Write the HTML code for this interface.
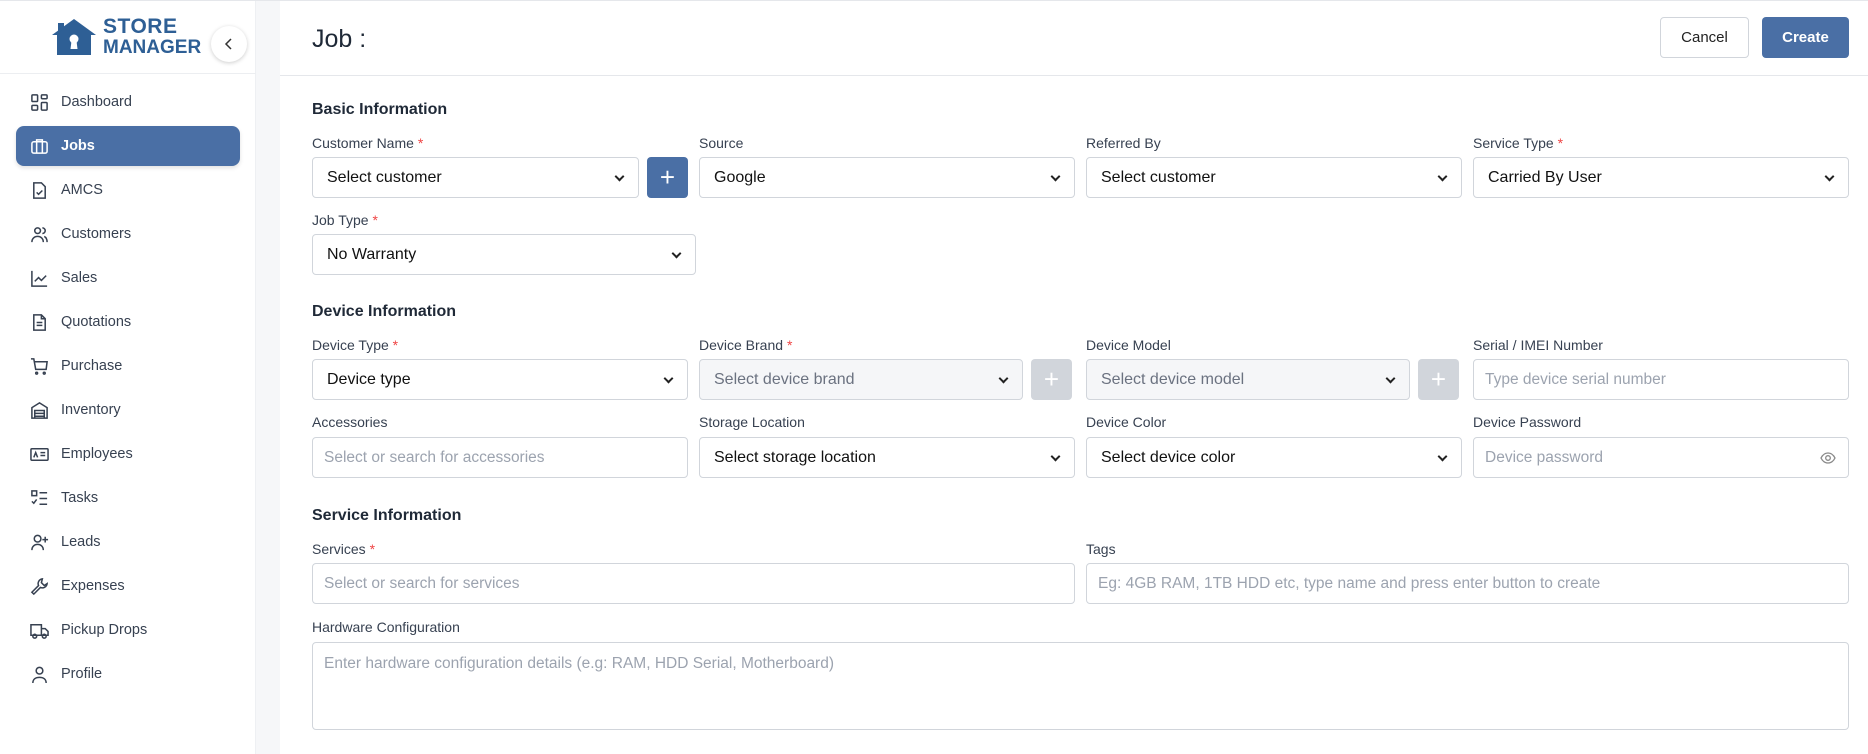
<!DOCTYPE html>
<html><head><meta charset="utf-8"><style>
*{box-sizing:border-box;margin:0;padding:0}
body{width:1868px;height:754px;overflow:hidden;background:#fff;font-family:"Liberation Sans",Arial,sans-serif;position:relative;color:#1f2937}
.abs{position:absolute}
.side{left:0;top:0;width:256px;height:754px;background:#fff;border-right:1px solid #eef0f3}
.gap{left:256px;top:0;width:24px;height:754px;background:#f6f7f9}
.topline{left:0;top:0;width:1868px;height:1px;background:#e5e7eb}
.item{position:absolute;left:30px;height:20px;display:flex;align-items:center;font-size:14.5px;color:#374151}
.item svg{width:19px;height:19px;margin-right:12px;stroke:#374151;fill:none;stroke-width:1.6}
.lbl{position:absolute;font-size:14px;color:#374151}
.lbl b{color:#ef4444;font-weight:normal}
.h{position:absolute;font-size:16px;font-weight:bold;color:#1f2937}
.f{position:absolute;height:41px;border:1px solid #d1d5db;border-radius:4px;background:#fff;font-size:16px;color:#111;padding-left:14px;display:flex;align-items:center}
.f.ph{color:#9ca3af;padding-left:11px;font-size:15.5px}
.f.dis{background:#f5f6f8;color:#6b7280}
.f.sel::after{content:"";position:absolute;right:15px;top:15px;width:5px;height:5px;border-right:2px solid #222;border-bottom:2px solid #222;transform:rotate(45deg)}
.plus{position:absolute;width:41px;height:41px;border-radius:4px;background:#4a6fa5;color:#fff;font-size:26px;display:flex;align-items:center;justify-content:center;font-weight:300}
</style></head><body>
<div class="abs side"></div>
<div class="abs gap"></div>
<div class="abs topline"></div>
<!-- logo -->
<svg class="abs" style="left:50px;top:17px" width="48" height="40" viewBox="0 0 48 40"><path d="M2 18 L24 2 L46 18 L41 18 L41 38 L7 38 L7 18 Z" fill="#2e5f95"/><path d="M8 6h6v6l-6 4z" fill="#2e5f95"/><circle cx="24" cy="22" r="4.5" fill="#fff"/><path d="M21.5 24 L20.5 32 L27.5 32 L26.5 24Z" fill="#fff"/></svg>
<div class="abs" style="left:103px;top:17px;font-size:21px;font-weight:bold;color:#2e5f95;line-height:20px;letter-spacing:0.5px">STORE</div>
<div class="abs" style="left:103px;top:38px;font-size:19px;font-weight:bold;color:#2e5f95;line-height:20px">MANAGER</div>
<div class="abs" style="left:211px;top:26px;width:36px;height:36px;border-radius:50%;background:#fff;box-shadow:0 1px 4px rgba(0,0,0,.2);display:flex;align-items:center;justify-content:center"><svg width="12" height="12" viewBox="0 0 12 12"><path d="M8 1 L3 6 L8 11" stroke="#333" stroke-width="1.5" fill="none"/></svg></div>
<div class="abs" style="left:0;top:73px;width:256px;height:1px;background:#eceef1"></div>
<div class="abs" style="left:16px;top:126px;width:224px;height:40px;border-radius:8px;background:#4a6fa5;box-shadow:0 2px 4px rgba(0,0,0,.12)"></div>

<div class="item" style="top:92px"><svg viewBox="0 0 20 20"><rect x="2" y="2" width="6" height="7" rx="1"/><rect x="12" y="2" width="6" height="4" rx="1"/><rect x="2" y="13" width="6" height="5" rx="1"/><rect x="12" y="10" width="6" height="8" rx="1"/></svg>Dashboard</div>
<div class="item" style="top:136px;color:#fff;font-weight:bold"><svg viewBox="0 0 20 20" style="stroke:#fff"><rect x="2" y="5" width="16" height="12" rx="2"/><path d="M7 5V3h6v2M7 5v12M13 5v12"/></svg>Jobs</div>
<div class="item" style="top:180px"><svg viewBox="0 0 20 20"><path d="M4 2h8l4 4v12H4z"/><path d="M7 12l2 2 4-4"/></svg>AMCS</div>
<div class="item" style="top:224px"><svg viewBox="0 0 20 20"><circle cx="8" cy="6" r="3"/><path d="M2 18c0-4 3-6 6-6s6 2 6 6M13 3a3 3 0 010 6M15 12c2 1 3 3 3 6"/></svg>Customers</div>
<div class="item" style="top:268px"><svg viewBox="0 0 20 20"><path d="M2 2v16h16M5 13l4-4 3 3 5-5"/></svg>Sales</div>
<div class="item" style="top:312px"><svg viewBox="0 0 20 20"><path d="M4 2h8l4 4v12H4z M12 2v4h4M7 10h6M7 13h6"/></svg>Quotations</div>
<div class="item" style="top:356px"><svg viewBox="0 0 20 20"><path d="M1 2h3l2 11h11l1-8H5"/><circle cx="7" cy="17" r="1"/><circle cx="15" cy="17" r="1"/></svg>Purchase</div>
<div class="item" style="top:400px"><svg viewBox="0 0 20 20"><path d="M2 18V7l8-5 8 5v11zM5 10h10v8H5zM5 13h10M5 16h10"/></svg>Inventory</div>
<div class="item" style="top:444px"><svg viewBox="0 0 20 20"><rect x="1" y="4" width="18" height="12" rx="1"/><path d="M4 13l2-5 2 5M11 8h5M11 11h5"/></svg>Employees</div>
<div class="item" style="top:488px"><svg viewBox="0 0 20 20"><rect x="2" y="2" width="5" height="5"/><path d="M2 13l2 2 3-4M10 4h8M10 10h8M10 16h8"/></svg>Tasks</div>
<div class="item" style="top:532px"><svg viewBox="0 0 20 20"><circle cx="8" cy="6" r="3.5"/><path d="M2 18c0-4 3-6 6-6s6 2 6 6M16 4v6M13 7h6"/></svg>Leads</div>
<div class="item" style="top:576px"><svg viewBox="0 0 20 20"><path d="M13 2a5 5 0 00-4 7L2 16l2 2 7-7a5 5 0 007-4l-3 2-3-3z"/></svg>Expenses</div>
<div class="item" style="top:620px"><svg viewBox="0 0 20 20"><path d="M1 4h11v11H1zM12 8h4l3 3v4h-7"/><circle cx="5" cy="16" r="2"/><circle cx="15" cy="16" r="2"/></svg>Pickup Drops</div>
<div class="item" style="top:664px"><svg viewBox="0 0 20 20"><circle cx="10" cy="6" r="3.5"/><path d="M3 19c0-4 3-6 7-6s7 2 7 6"/></svg>Profile</div>

<!-- header -->
<div class="abs" style="left:312px;top:25px;font-size:25px;color:#1f2937">Job :</div>
<div class="abs" style="left:280px;top:75px;width:1588px;height:1px;background:#e5e7eb"></div>
<div class="abs" style="left:1660px;top:17px;width:89px;height:41px;border:1px solid #d1d5db;border-radius:4px;display:flex;align-items:center;justify-content:center;font-size:15px;color:#222">Cancel</div>
<div class="abs" style="left:1762px;top:17px;width:87px;height:41px;background:#4a6fa5;border-radius:4px;display:flex;align-items:center;justify-content:center;font-size:15px;color:#fff;font-weight:bold">Create</div>

<!-- Basic -->
<div class="h" style="left:312px;top:101px">Basic Information</div>
<div class="lbl" style="left:312px;top:135px">Customer Name <b>*</b></div>
<div class="f sel" style="left:312px;top:157px;width:327px">Select customer</div>
<div class="plus" style="left:647px;top:157px">+</div>
<div class="lbl" style="left:699px;top:135px">Source</div>
<div class="f sel" style="left:699px;top:157px;width:376px">Google</div>
<div class="lbl" style="left:1086px;top:135px">Referred By</div>
<div class="f sel" style="left:1086px;top:157px;width:376px">Select customer</div>
<div class="lbl" style="left:1473px;top:135px">Service Type <b>*</b></div>
<div class="f sel" style="left:1473px;top:157px;width:376px">Carried By User</div>
<div class="lbl" style="left:312px;top:212px">Job Type <b>*</b></div>
<div class="f sel" style="left:312px;top:234px;width:384px">No Warranty</div>

<!-- Device -->
<div class="h" style="left:312px;top:303px">Device Information</div>
<div class="lbl" style="left:312px;top:337px">Device Type <b>*</b></div>
<div class="f sel" style="left:312px;top:359px;width:376px">Device type</div>
<div class="lbl" style="left:699px;top:337px">Device Brand <b>*</b></div>
<div class="f sel dis" style="left:699px;top:359px;width:324px">Select device brand</div>
<div class="plus" style="left:1031px;top:359px;background:#d1d5db">+</div>
<div class="lbl" style="left:1086px;top:337px">Device Model</div>
<div class="f sel dis" style="left:1086px;top:359px;width:324px">Select device model</div>
<div class="plus" style="left:1418px;top:359px;background:#d1d5db">+</div>
<div class="lbl" style="left:1473px;top:337px">Serial / IMEI Number</div>
<div class="f ph" style="left:1473px;top:359px;width:376px">Type device serial number</div>

<div class="lbl" style="left:312px;top:414px">Accessories</div>
<div class="f ph" style="left:312px;top:437px;width:376px">Select or search for accessories</div>
<div class="lbl" style="left:699px;top:414px">Storage Location</div>
<div class="f sel" style="left:699px;top:437px;width:376px">Select storage location</div>
<div class="lbl" style="left:1086px;top:414px">Device Color</div>
<div class="f sel" style="left:1086px;top:437px;width:376px">Select device color</div>
<div class="lbl" style="left:1473px;top:414px">Device Password</div>
<div class="f ph" style="left:1473px;top:437px;width:376px">Device password
<svg style="position:absolute;right:12px;top:13px" width="16" height="14" viewBox="0 0 16 14"><path d="M1 7c2-4 5-5 7-5s5 1 7 5c-2 4-5 5-7 5S3 11 1 7z" fill="none" stroke="#888" stroke-width="1.3"/><circle cx="8" cy="7" r="2.3" fill="none" stroke="#888" stroke-width="1.3"/></svg></div>

<!-- Service -->
<div class="h" style="left:312px;top:507px">Service Information</div>
<div class="lbl" style="left:312px;top:541px">Services <b>*</b></div>
<div class="f ph" style="left:312px;top:563px;width:763px">Select or search for services</div>
<div class="lbl" style="left:1086px;top:541px">Tags</div>
<div class="f ph" style="left:1086px;top:563px;width:763px">Eg: 4GB RAM, 1TB HDD etc, type name and press enter button to create</div>
<div class="lbl" style="left:312px;top:619px">Hardware Configuration</div>
<div class="f ph" style="left:312px;top:642px;width:1537px;height:88px;align-items:flex-start;padding-top:12px">Enter hardware configuration details (e.g: RAM, HDD Serial, Motherboard)</div>
</body></html>
